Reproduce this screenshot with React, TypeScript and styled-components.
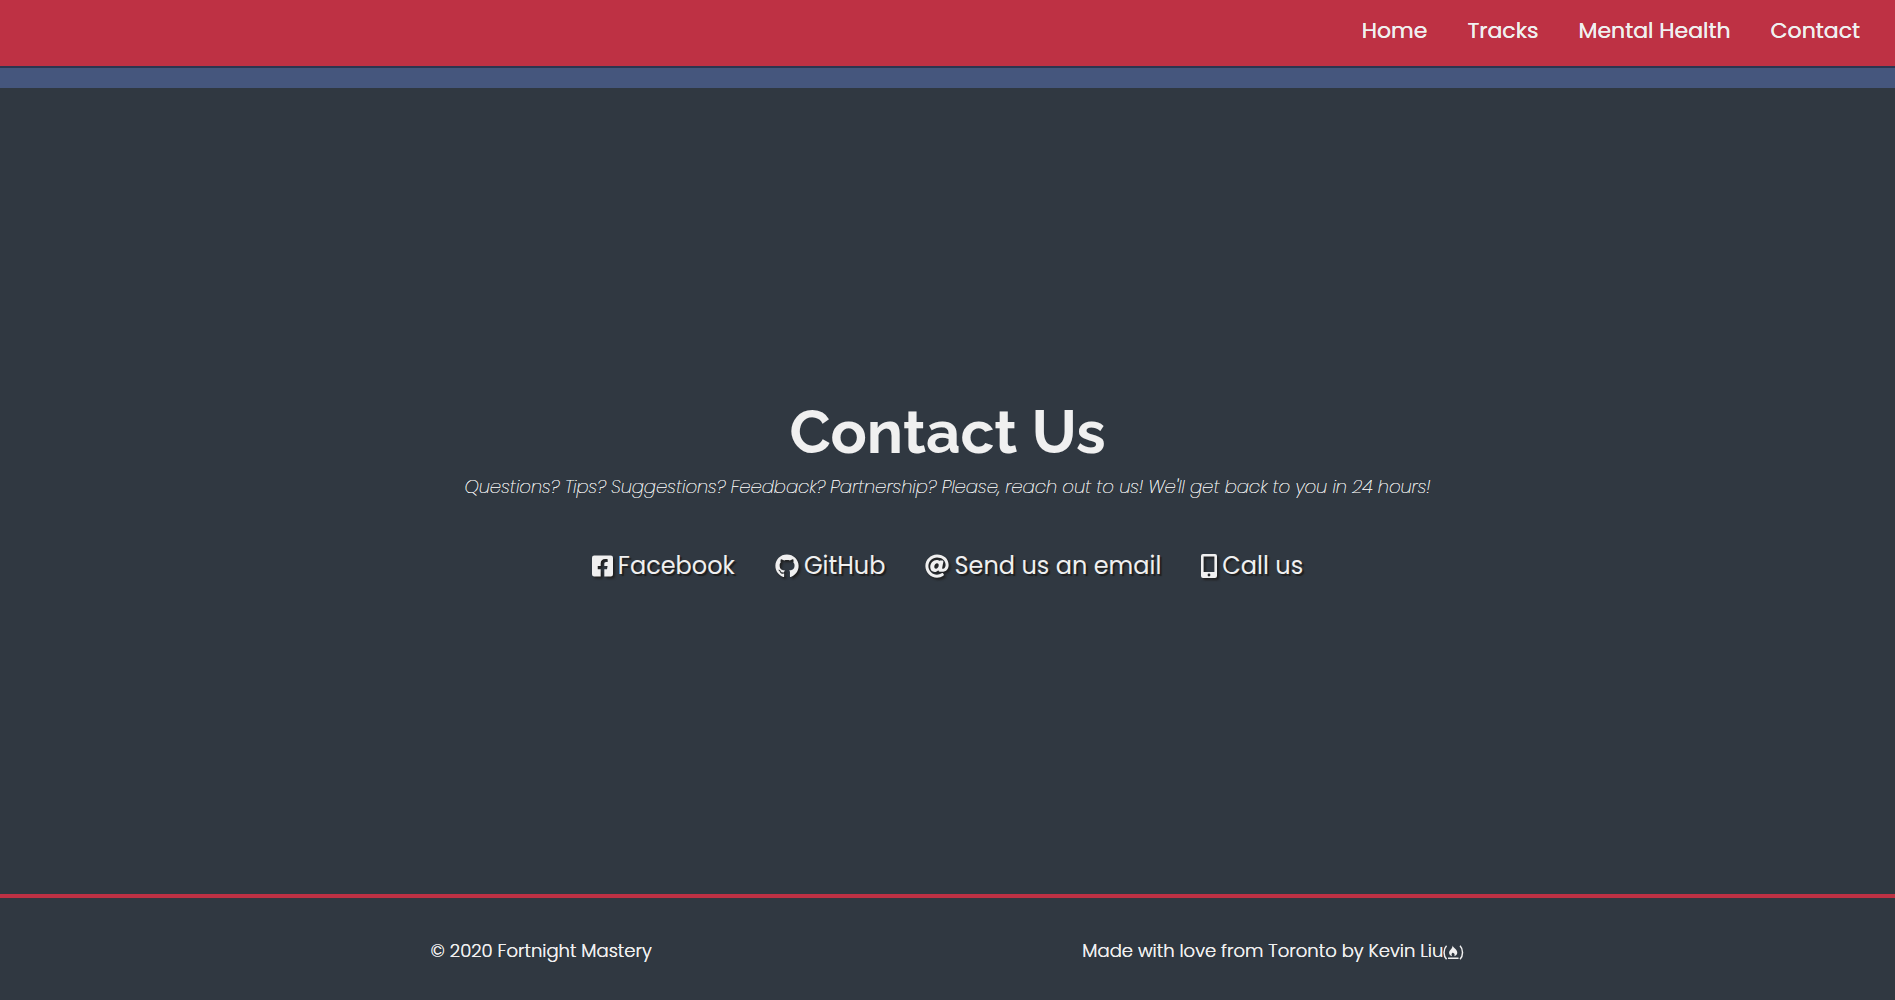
import type { ComponentType } from "react";
import styled, { createGlobalStyle } from "styled-components";
import { FaAt, FaFacebookSquare, FaGithub } from "react-icons/fa";

const colors = {
  red: "#be3144",
  blue: "#45567d",
  navy: "#2c3550",
  dark: "#303841",
  light: "#f0f0f0",
};

const GlobalStyle = createGlobalStyle`
  *, *::before, *::after { box-sizing: border-box; margin: 0; padding: 0; }
  body {
    background: ${colors.dark};
    color: ${colors.light};
    font-family: Poppins, Inter, sans-serif;
    font-size: 18px;
  }
`;

const Page = styled.div`
  display: flex;
  flex-direction: column;
  min-height: 100vh;
`;

const Header = styled.header`
  background: ${colors.red};
  border-bottom: 2px solid ${colors.navy};
`;

const NavList = styled.ul`
  display: flex;
  flex-wrap: wrap;
  justify-content: flex-end;
  gap: 40px;
  list-style: none;
  padding: 15px 35px 19px;
`;

const NavLink = styled.a`
  display: block;
  color: ${colors.light};
  font-size: 22px;
  font-weight: 400;
  line-height: 32px;
  text-decoration: none;
  text-shadow: 0 0 0 currentColor;
`;

const Stripe = styled.div`
  height: 20px;
  background: ${colors.blue};
`;

const Main = styled.main`
  flex: 1;
  display: flex;
  flex-direction: column;
  align-items: center;
  justify-content: center;
  text-align: center;
`;

const Title = styled.h1`
  font-family: Raleway, Lato, sans-serif;
  font-size: 60px;
  font-weight: 700;
  line-height: 72px;
`;

const Intro = styled.p`
  font-size: 18px;
  font-style: italic;
  font-weight: 200;
  line-height: 38px;
  text-shadow: 0 0 0 currentColor, 0 0 0 currentColor;
`;

const ContactList = styled.ul`
  display: flex;
  flex-wrap: wrap;
  justify-content: center;
  gap: 40px;
  margin-top: 40px;
  list-style: none;
`;

const ContactLink = styled.a`
  display: flex;
  align-items: center;
  gap: 5px;
  color: ${colors.light};
  font-size: 24px;
  line-height: 40px;
  text-decoration: none;
  text-shadow: 2px 2px 1px #1f1f1f;
`;

const ContactIcon = styled.span<{ $width: number }>`
  display: flex;
  width: ${({ $width }) => $width}px;
  height: 24px;
  filter: drop-shadow(2px 2px 1px #1f1f1f);

  svg {
    width: 100%;
    height: 100%;
  }
`;

const Footer = styled.footer`
  display: flex;
  flex-wrap: wrap;
  justify-content: space-evenly;
  padding: 41px 0 37px;
  border-top: 4px solid ${colors.red};
  font-weight: 300;
  line-height: 24px;
  text-shadow: 0 0 0 currentColor;
`;

const ProfileLink = styled.a`
  color: ${colors.light};

  svg { vertical-align: -3px; }
`;

const PhoneIcon = () => (
  <svg viewBox="0 0 16 24" aria-hidden="true">
    <path
      fill="currentColor"
      fillRule="evenodd"
      d="M2 0H14A2 2 0 0 1 16 2V22A2 2 0 0 1 14 24H2A2 2 0 0 1 0 22V2A2 2 0 0 1 2 0ZM2.6 2.4V18H13.4V2.4ZM8 19.6A1.4 1.4 0 1 0 8 22.4A1.4 1.4 0 1 0 8 19.6Z"
    />
  </svg>
);

const CampfireIcon = () => (
  <svg width="21" height="15" viewBox="0 0 20 14" fill="none" aria-hidden="true">
    <path
      d="M3.4 .6C.2 3.8 .2 10.2 3.4 13.4M16.2 .6C19.4 3.8 19.4 10.2 16.2 13.4M4.8 12.5H14.8"
      stroke="currentColor"
      strokeWidth="1.4"
    />
    <path
      d="M9.2 .4C9.8 2.8 13.6 4 13.6 7.2C13.6 9 12.2 10.2 10.7 10.6C11.5 9.4 11 8.1 10 7.2C9.9 8.1 9.2 7.9 9.3 7C8 8 7.8 9.5 8.8 10.6C7 10.1 5.8 8.8 5.8 7.2C5.8 4.8 9 4 9.2 .4Z"
      fill="currentColor"
    />
  </svg>
);

const pages = ["Home", "Tracks", "Mental Health", "Contact"];

const contacts: { label: string; Icon: ComponentType; width: number }[] = [
  { label: "Facebook", Icon: FaFacebookSquare, width: 21 },
  { label: "GitHub", Icon: FaGithub, width: 24 },
  { label: "Send us an email", Icon: FaAt, width: 24 },
  { label: "Call us", Icon: PhoneIcon, width: 16 },
];

export default function App() {
  return (
    <Page>
      <GlobalStyle />
      <Header>
        <nav>
          <NavList>
            {pages.map((page) => (
              <li key={page}><NavLink href="#">{page}</NavLink></li>
            ))}
          </NavList>
        </nav>
      </Header>
      <Stripe />
      <Main>
        <Title>Contact Us</Title>
        <Intro>
          Questions? Tips? Suggestions? Feedback? Partnership? Please, reach out to us! We'll get back to you in 24 hours!
        </Intro>
        <ContactList>
          {contacts.map(({ label, Icon, width }) => (
            <li key={label}>
              <ContactLink href="#">
                <ContactIcon $width={width}><Icon /></ContactIcon>
                {label}
              </ContactLink>
            </li>
          ))}
        </ContactList>
      </Main>
      <Footer>
        <p>© 2020 Fortnight Mastery</p>
        <p>
          Made with love from Toronto by Kevin Liu
          <ProfileLink href="#" aria-label="freeCodeCamp profile"><CampfireIcon /></ProfileLink>
        </p>
      </Footer>
    </Page>
  );
}
